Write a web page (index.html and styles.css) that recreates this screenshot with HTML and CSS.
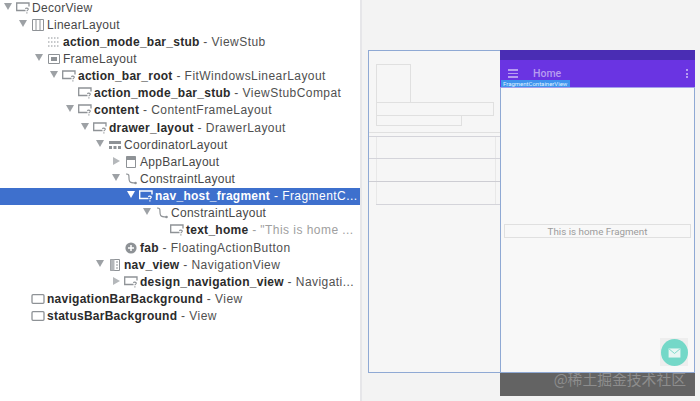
FILE: index.html
```html
<!DOCTYPE html>
<html lang="en">
<head>
<meta charset="utf-8">
<title>Layout Inspector</title>
<link rel="stylesheet" href="styles.css">
</head>
<body>
<svg class="defs" width="0" height="0" aria-hidden="true">
  <symbol id="i-q" viewBox="0 0 14 12"><path d="M9.500 8.500H.7V1H13V4.500" fill="none" stroke="#8e9296" stroke-width="1.300"/><path d="M9.400 6.800c.3-1 2.800-1 2.900.3.100 1-1.400 1-1.400 2.200M10.900 10.200v1.400" fill="none" stroke="#8e9296" stroke-width="1.100"/></symbol>
  <symbol id="i-q-w" viewBox="0 0 14 12"><path d="M9.500 8.500H.7V1H13V4.500" fill="none" stroke="#fff" stroke-width="1.400"/><path d="M9.400 6.800c.3-1 2.800-1 2.900.3.100 1-1.400 1-1.400 2.200M10.900 10.200v1.400" fill="none" stroke="#fff" stroke-width="1.200"/></symbol>
  <symbol id="i-linear" viewBox="0 0 14 12"><path d="M1.500 .5h11v11h-11zM5 .5v11M9 .5v11" fill="none" stroke="#8e9296"/></symbol>
  <symbol id="i-stub" viewBox="0 0 14 12"><path d="M1 2h12M1 6h12M1 10h12" fill="none" stroke="#8e9296" stroke-dasharray="1.500 1.500"/></symbol>
  <symbol id="i-frame" viewBox="0 0 14 12"><path d="M1.500 1.500h11v9h-11z" fill="none" stroke="#8e9296"/><path d="M4 4h6v4H4z" fill="#8e9296"/></symbol>
  <symbol id="i-coord" viewBox="0 0 14 12"><path d="M1 2h12v3H1z" fill="#8e9296"/><path d="M1 7h3v3H1zM5.500 7h3v3h-3zM10 7h3v3h-3z" fill="#8e9296"/></symbol>
  <symbol id="i-appbar" viewBox="0 0 14 12"><path d="M2.500 .5h9v11h-9z" fill="none" stroke="#8e9296"/><path d="M2.500 .5h9v3.500h-9z" fill="#8e9296"/></symbol>
  <symbol id="i-constraint" viewBox="0 0 14 12"><path d="M2 1c3 0 3 1 3 4s0 5 6 5" fill="none" stroke="#8e9296" stroke-width="1.200"/><circle cx="11.500" cy="10" r="1.300" fill="#8e9296"/></symbol>
  <symbol id="i-fab" viewBox="0 0 14 12"><circle cx="7" cy="6" r="5.600" fill="#8e9296"/><path d="M7 3v6M4 6h6" stroke="#fff" stroke-width="1.500"/></symbol>
  <symbol id="i-nav" viewBox="0 0 14 12"><path d="M2.500 .5h9v11h-9z" fill="none" stroke="#8e9296"/><path d="M2.500 .5h4v11h-4z" fill="#b4b7ba"/><path d="M8 3h2M8 6h2M8 9h2" stroke="#8e9296"/></symbol>
  <symbol id="i-view" viewBox="0 0 14 12"><rect x="1" y="1.700" width="12" height="8.600" rx="1" fill="none" stroke="#8e9296" stroke-width="1.300"/></symbol>
</svg>

<main class="inspector">
  <section class="tree">
    <div class="row l0"><span class="arrow down"></span><svg class="ico"><use href="#i-q"/></svg><span class="plain">DecorView</span></div>
    <div class="row l1"><span class="arrow down"></span><svg class="ico"><use href="#i-linear"/></svg><span class="plain">LinearLayout</span></div>
    <div class="row l2"><span class="arrow none"></span><svg class="ico"><use href="#i-stub"/></svg><b>action_mode_bar_stub</b><span class="sub"> - ViewStub</span></div>
    <div class="row l2"><span class="arrow down"></span><svg class="ico"><use href="#i-frame"/></svg><span class="plain">FrameLayout</span></div>
    <div class="row l3"><span class="arrow down"></span><svg class="ico"><use href="#i-q"/></svg><b>action_bar_root</b><span class="sub"> - FitWindowsLinearLayout</span></div>
    <div class="row l4"><span class="arrow none"></span><svg class="ico"><use href="#i-q"/></svg><b>action_mode_bar_stub</b><span class="sub"> - ViewStubCompat</span></div>
    <div class="row l4"><span class="arrow down"></span><svg class="ico"><use href="#i-q"/></svg><b>content</b><span class="sub"> - ContentFrameLayout</span></div>
    <div class="row l5"><span class="arrow down"></span><svg class="ico"><use href="#i-q"/></svg><b>drawer_layout</b><span class="sub"> - DrawerLayout</span></div>
    <div class="row l6"><span class="arrow down"></span><svg class="ico"><use href="#i-coord"/></svg><span class="plain">CoordinatorLayout</span></div>
    <div class="row l7"><span class="arrow right"></span><svg class="ico"><use href="#i-appbar"/></svg><span class="plain">AppBarLayout</span></div>
    <div class="row l7"><span class="arrow down"></span><svg class="ico"><use href="#i-constraint"/></svg><span class="plain">ConstraintLayout</span></div>
    <div class="row l8 selected"><span class="arrow down"></span><svg class="ico"><use href="#i-q-w"/></svg><b>nav_host_fragment</b><span class="sub"> - FragmentC...</span></div>
    <div class="row l9"><span class="arrow down"></span><svg class="ico"><use href="#i-constraint"/></svg><span class="plain">ConstraintLayout</span></div>
    <div class="row l10"><span class="arrow none"></span><svg class="ico"><use href="#i-q"/></svg><b>text_home</b><span class="sub muted"> - "This is home ...</span></div>
    <div class="row l7"><span class="arrow none"></span><svg class="ico"><use href="#i-fab"/></svg><b>fab</b><span class="sub"> - FloatingActionButton</span></div>
    <div class="row l6"><span class="arrow down"></span><svg class="ico"><use href="#i-nav"/></svg><b>nav_view</b><span class="sub"> - NavigationView</span></div>
    <div class="row l7"><span class="arrow right"></span><svg class="ico"><use href="#i-q"/></svg><b>design_navigation_view</b><span class="sub"> - Navigati...</span></div>
    <div class="row l1b"><span class="arrow none"></span><svg class="ico"><use href="#i-view"/></svg><b>navigationBarBackground</b><span class="sub"> - View</span></div>
    <div class="row l1b"><span class="arrow none"></span><svg class="ico"><use href="#i-view"/></svg><b>statusBarBackground</b><span class="sub"> - View</span></div>
  </section>

  <section class="canvas">
    <div class="outline drawer">
      <div class="wire w-a"></div>
      <div class="wire w-b"></div>
      <div class="wire w-c"></div>
      <div class="wire w-d"></div>
      <div class="wire w-e"></div>
      <div class="wire w-f"></div>
      <div class="wire w-g"></div>
      <div class="wire w-h"></div>
    </div>
    <div class="phone">
      <div class="statusbar"></div>
      <div class="toolbar">
        <span class="burger"><i></i><i></i><i></i></span>
        <span class="title">Home</span>
        <span class="dots"><i></i><i></i><i></i></span>
      </div>
      <div class="tag">FragmentContainerView</div>
      <div class="body">
        <div class="home-text">This is home Fragment</div>
        <div class="fab-box">
          <div class="fab">
            <svg width="13" height="10" viewBox="0 0 14 11"><path d="M.5.5h13v10H.5z" fill="#e8f6f3"/><path d="M1 1l6 5 6-5" fill="none" stroke="#74d8c8"/></svg>
          </div>
        </div>
      </div>
      <div class="navbar"><span class="mark">@稀土掘金技术社区</span></div>
    </div>
  </section>
</main>
</body>
</html>
```
FILE: styles.css
```css
* { box-sizing: border-box; }
html, body { margin: 0; padding: 0; }
body { width: 700px; height: 401px; overflow: hidden; background: #fff; font-family: "Liberation Sans", Arial, sans-serif; }
.defs { position: absolute; }

.inspector { display: flex; width: 700px; height: 401px; }

.tree { width: 360px; flex: none; background: #fff; overflow: hidden; }
.row { height: 17.15px; display: flex; align-items: center; font-size: 12px; color: #3a3a3a; white-space: pre; letter-spacing: .45px; }
.row:first-child { margin-top: -1px; }
.row b { font-weight: 700; color: #2b2b2b; letter-spacing: .26px; }
.sub { color: #505050; }
.sub.muted { color: #a0a0a0; }
.plain { color: #484848; letter-spacing: .28px; }

.l0 { padding-left: 3px; }
.l1 { padding-left: 18px; }
.l1b { padding-left: 18px; }
.l2 { padding-left: 34px; }
.l3 { padding-left: 49px; }
.l4 { padding-left: 65px; }
.l5 { padding-left: 80px; }
.l6 { padding-left: 95px; }
.l7 { padding-left: 111px; }
.l8 { padding-left: 126px; }
.l9 { padding-left: 142px; }
.l10 { padding-left: 157px; }

.arrow { width: 13px; height: 8px; flex: none; position: relative; top: -1px; }
.arrow::before { content: ""; position: absolute; left: 1px; top: 0; border: 4px solid transparent; }
.arrow.down::before { border-top: 7px solid #9da1a5; border-bottom: 0; }
.arrow.right::before { border-left: 7px solid #b5b8bb; border-right: 0; left: 2px; }
.arrow.none::before { display: none; }

.ico { width: 14px; height: 12px; flex: none; margin-right: 2px; }

.selected { background: #3e70cd; color: #fff; }
.selected b, .selected .sub { color: #fff; }
.selected .arrow.down::before { border-top-color: #fff; }

.canvas { width: 340px; flex: none; position: relative; background: #f3f3f3; border-left: 2px solid #e6e6e9; }

.outline { position: absolute; left: 6px; top: 50px; width: 133px; height: 323px; border: 1px solid #8fa9d4; background: #f6f6f6; }
.wire { position: absolute; border: 1px solid #e0e0e0; }
.w-a { left: 7px; top: 13px; width: 35px; height: 39px; }
.w-b { left: 7px; top: 51px; width: 118px; height: 14px; }
.w-c { left: 7px; top: 64px; width: 86px; height: 11px; }
.w-d { left: 0; top: 81px; width: 131px; height: 5px; border-width: 1px 0; }
.w-e { left: 7px; top: 86px; width: 120px; height: 68px; border-top: 0; border-bottom: 0; border-color: #e8e8e8; }
.w-f { left: 0; top: 85px; width: 131px; height: 23px; border-width: 1px 0; border-color: #d4d4da; }
.w-g { left: 0; top: 130px; width: 131px; height: 1px; border-width: 1px 0 0; border-color: #cdcdd3; }
.w-h { left: 7px; top: 130px; width: 124px; height: 24px; border-width: 0 0 1px; border-color: #d4d4da; }

.phone { position: absolute; left: 138px; top: 50px; width: 195px; height: 346px; display: flex; flex-direction: column; }
.statusbar { height: 10px; background: #4a2db4; flex: none; }
.toolbar { height: 27px; flex: none; background: #6a34e2; display: flex; align-items: center; padding: 0 7px 0 8px; position: relative; }
.burger { display: flex; flex-direction: column; gap: 2px; width: 10px; }
.burger i { display: block; height: 1.500px; background: #b79cf0; }
.title { margin-left: 15px; font: 500 10.500px Roboto, sans-serif; color: #b79cf0; }
.dots { margin-left: auto; display: flex; flex-direction: column; gap: 1.500px; }
.dots i { display: block; width: 2px; height: 2px; background: #b79cf0; }
.tag { position: absolute; left: 1px; top: 30px; width: 69px; height: 7px; background: #3f94ee; color: #dff0ff; font: 6px/7px Roboto, sans-serif; padding-left: 2px; white-space: nowrap; overflow: hidden; }
.body { flex: 1; background: #f8f8f8; border: 1px solid #8fa9d4; border-top: 1px solid #a4a0ea; position: relative; }
.home-text { position: absolute; left: 3px; right: 3px; top: 136px; height: 14px; border: 1px solid #e0e0e0; font: 9.800px/13px Roboto, sans-serif; color: #9c9c9c; text-align: center; }
.fab-box { position: absolute; left: 159px; top: 250px; width: 28px; height: 28px; background: #eeeeee; }
.fab { width: 27px; height: 27px; margin-left: 1px; margin-top: 1px; border-radius: 50%; background: #74d8c8; display: flex; align-items: center; justify-content: center; }
.navbar { height: 23px; flex: none; background: #636363; display: flex; justify-content: flex-end; align-items: flex-start; padding-right: 9px; }
.mark { font: 14.800px/22px "Noto Sans CJK SC", sans-serif; color: #8d8d8d; white-space: nowrap; margin-top: -5px; }
```
